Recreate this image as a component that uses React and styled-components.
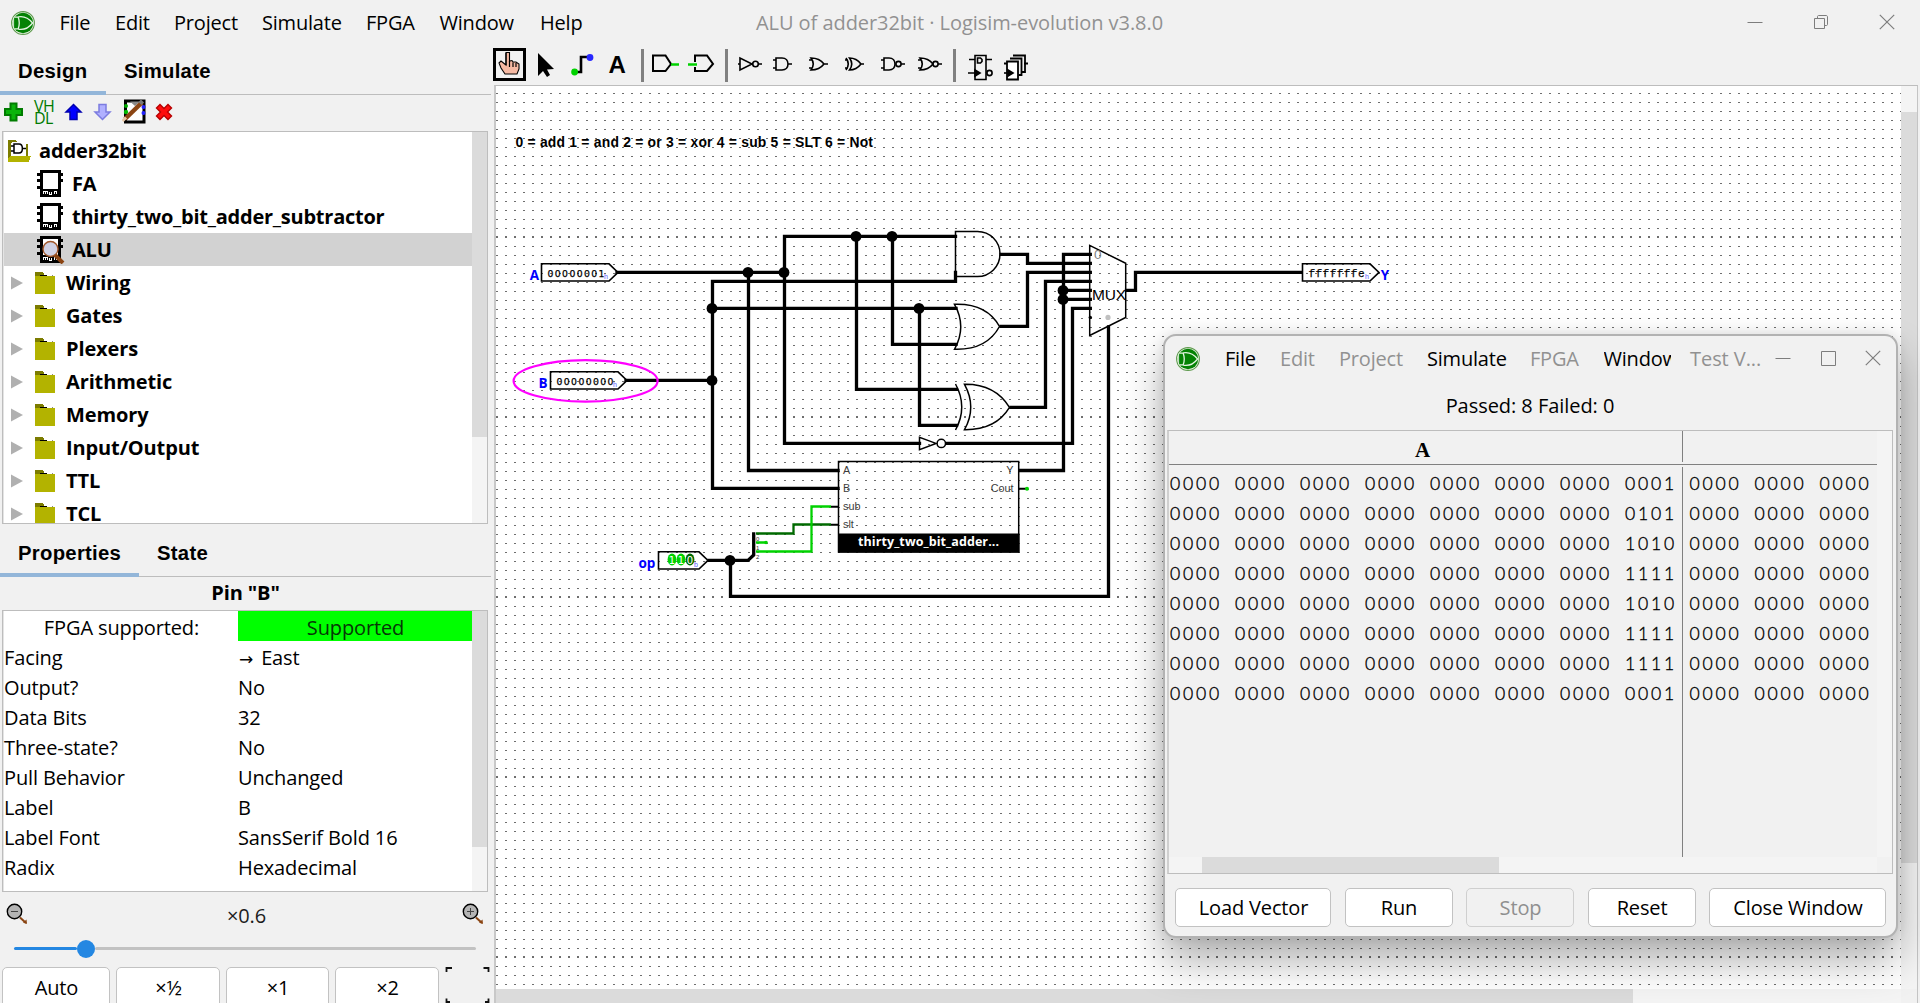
import React from "react";
import styled, { createGlobalStyle } from "styled-components";

const ui = `"Open Sans", "Noto Sans", sans-serif`;
const arial = `"Liberation Sans", Arial, sans-serif`;

const Global = createGlobalStyle`
  * { box-sizing: border-box; }
  body { margin: 0; background: #f1f1f1; overflow: hidden; }
`;

const Frame = styled.div`
  position: relative;
  display: flex;
  flex-direction: column;
  width: 1920px;
  height: 1003px;
  overflow: hidden;
  background: #f1f1f1;
  color: #000;
  font: 20px ${ui};
`;

/* ---------- title bar and menus ---------- */

const TitleBar = styled.header`
  display: flex;
  align-items: center;
  flex: none;
  height: ${(p) => p.$h}px;
  padding-left: ${(p) => p.$pad}px;
  line-height: ${(p) => p.$h}px;
  white-space: nowrap;
`;
const LogoBox = styled.span`
  display: flex;
  flex: none;
  width: ${(p) => p.$w}px;
`;
const MenuItem = styled.span`
  flex: none;
  width: ${(p) => p.$w}px;
  overflow: ${(p) => (p.$clip ? "hidden" : "visible")};
  color: ${(p) => (p.$off ? "#919191" : "#000")};
  letter-spacing: -0.2px;
`;
const Caption = styled.span`
  flex: none;
  width: ${(p) => p.$w}px;
  padding-left: ${(p) => p.$pad || 0}px;
  color: #919191;
  letter-spacing: -0.06px;
`;
const Controls = styled.div`
  display: flex;
  flex: none;
  align-items: center;
  gap: ${(p) => p.$gap}px;
  padding-bottom: 2px;
`;

/* ---------- page columns ---------- */

const Body = styled.div`
  display: flex;
  flex: 1;
  min-height: 0;
`;
const Side = styled.aside`
  display: flex;
  flex-direction: column;
  flex: none;
  width: 494px;
`;
const Main = styled.main`
  display: flex;
  flex-direction: column;
  flex: none;
  width: 1426px;
`;

const TabBar = styled.div`
  display: flex;
  flex: none;
  width: 491px;
  height: 50px;
  margin-top: ${(p) => p.$top || 0}px;
  box-shadow: inset 0 -1px 0 #bdbdbd;
`;
const Tab = styled.div`
  width: ${(p) => p.$w}px;
  height: 50px;
  padding-left: 18px;
  border-bottom: 4px solid ${(p) => (p.$active ? "#93b6d9" : "transparent")};
  font: bold 20.3px/52px ${arial};
  letter-spacing: 0.28px;
`;

const IconBar = styled.div`
  display: flex;
  align-items: center;
  flex: none;
  height: 36px;
  padding: 0 0 3px 3px;
`;
const IconCell = styled.span`
  display: flex;
  flex: none;
  width: ${(p) => p.$w}px;
`;
const Vhdl = styled.span`
  width: 30px;
  color: #007a00;
  font: 16px/12px "Open Sans", sans-serif;
  letter-spacing: -0.6px;
  white-space: pre;
`;

const Panel = styled.section`
  display: flex;
  flex: none;
  width: 486px;
  height: ${(p) => p.$h}px;
  margin-left: 2px;
  border: 1px solid #bdbdbd;
  background: #fff;
  box-shadow: inset 1px 0 0 #e4e4e4;
`;
const PanelBody = styled.div`
  width: 469px;
  height: 100%;
  padding: ${(p) => p.$top || 0}px 0 0 1px;
  overflow: hidden;
`;
const VScroll = styled.div`
  width: ${(p) => p.$w}px;
  padding-top: ${(p) => p.$start || 0}px;
  background: #f4f4f4;
`;
const VThumb = styled.div`
  height: ${(p) => p.$h}px;
  background: #dbdbdb;
`;

const TreeRow = styled.div`
  display: flex;
  align-items: center;
  height: 33px;
  line-height: 35px;
  padding-left: ${(p) => p.$pad}px;
  background: ${(p) => (p.$selected ? "#d2d2d2" : "transparent")};
  font-weight: 700;
  letter-spacing: ${(p) => p.$ls}px;
  white-space: nowrap;
`;

const Heading = styled.div`
  flex: none;
  width: 491px;
  height: 33px;
  font-weight: 700;
  line-height: 31px;
  letter-spacing: -0.1px;
  text-align: center;
`;
const PropRow = styled.div`
  display: grid;
  grid-template-columns: 234px 234px;
  height: 30px;
  line-height: 33.5px;
  white-space: nowrap;
  letter-spacing: -0.12px;
`;
const PropCell = styled.div`
  height: 30px;
  padding-left: ${(p) => (p.$center ? 1 : 0)}px;
  text-align: ${(p) => (p.$center ? "center" : "left")};
  background: ${(p) => (p.$green ? "#00ff00" : "transparent")};
  color: ${(p) => (p.$green ? "#073607" : "#000")};
`;
const Arrow = styled.span`
  margin: 0 8px 0 1px;
  font: 17px/20px "DejaVu Sans", sans-serif;
`;

const ZoomRow = styled.div`
  display: flex;
  justify-content: space-between;
  flex: none;
  height: 44px;
  padding: 11px 10px 0 6px;
  width: 494px;
`;
const ZoomValue = styled.span`
  padding-left: 3px;
  line-height: 25px;
  color: #1c1c1c;
  letter-spacing: -0.2px;
`;
const Slider = styled.div`
  display: flex;
  align-items: center;
  flex: none;
  width: 462px;
  height: 26px;
  padding-bottom: 1px;
  margin-left: 14px;
`;
const SliderBar = styled.div`
  flex: ${(p) => (p.$w ? `0 0 ${p.$w}px` : "1")};
  height: 3px;
  border-radius: 2px;
  background: ${(p) => (p.$w ? "#2487e2" : "#c2c2c2")};
`;
const SliderThumb = styled.div`
  width: 18px;
  height: 18px;
  border-radius: 50%;
  background: #2487e2;
`;
const ButtonRow = styled.div`
  display: flex;
  flex: none;
  gap: ${(p) => p.$gap}px;
  padding: ${(p) => p.$pad};
`;
const Button = styled.button`
  flex: none;
  width: ${(p) => p.$w}px;
  height: ${(p) => p.$h}px;
  padding: 0 0 0 1px;
  border: 1.5px solid ${(p) => (p.disabled ? "#cfcfcf" : "#c2c2c2")};
  border-radius: 5px;
  background: ${(p) => (p.disabled ? "#f1f1f1" : "#fff")};
  color: ${(p) => (p.disabled ? "#8f8f8f" : "#000")};
  font: 20px ${ui};
  letter-spacing: -0.15px;
  white-space: nowrap;
`;

/* ---------- tool bar and canvas ---------- */

const ToolBar = styled.div`
  flex: none;
  height: 40px;
`;
const Drawing = styled.svg`
  display: block;
`;
const CanvasBox = styled.div`
  display: grid;
  grid-template-columns: 1405px 16px;
  grid-template-rows: 903px 14px;
  flex: none;
  width: 1424px;
  height: 918px;
  border-top: 1px solid #bdbdbd;
  border-left: 2px solid #c8c8c8;
  border-right: 1px solid #c4c4c4;
`;
const HTrack = styled.div`
  background: #f4f4f4;
`;
const HThumb = styled.div`
  width: ${(p) => p.$w}px;
  height: 100%;
  margin-left: ${(p) => p.$start || 0}px;
  background: #dbdbdb;
`;

/* ---------- test vector window ---------- */

const Dialog = styled.section`
  position: absolute;
  left: 1163px;
  top: 334px;
  display: flex;
  flex-direction: column;
  width: 735px;
  height: 604px;
  border: 2px solid #b2b2b2;
  border-radius: 13px;
  background: #f1f1f1;
  box-shadow: 0 22px 42px rgba(0, 0, 0, 0.32), 0 0 14px rgba(0, 0, 0, 0.1);
`;
const Status = styled.div`
  flex: none;
  height: 49px;
  line-height: 49px;
  padding-right: 1px;
  text-align: center;
  letter-spacing: -0.05px;
`;
const Vector = styled.div`
  display: grid;
  grid-template-columns: 708px 15px;
  grid-template-rows: 426px 16px;
  flex: none;
  width: 726px;
  height: 444px;
  margin-left: 2px;
  border: 1px solid #bdbdbd;
  border-left-width: 2px;
  border-left-color: #cfcfcf;
`;
const VectorGrid = styled.div`
  display: grid;
  grid-template-columns: 514px 194px;
  grid-template-rows: 34px 392px;
  overflow: hidden;
`;
const VectorHead = styled.div`
  padding-left: 246px;
  border-bottom: 1px solid #808080;
  font: bold 21px/38px "Liberation Serif", serif;
  background: ${(p) => (p.$line ? "linear-gradient(#808080, #808080) right top / 1px 31px no-repeat" : "none")};
`;
const VectorBody = styled.div`
  padding: 4px 0 0 ${(p) => p.$left}px;
  background: ${(p) => (p.$line ? "linear-gradient(#808080, #808080) right 2px / 1px 390px no-repeat" : "none")};
  background-position: right 2px;
  overflow: hidden;
`;
const VectorRow = styled.div`
  display: grid;
  grid-template-columns: repeat(8, 65px);
  height: 30px;
  font: 300 17.6px/30px Lato, sans-serif;
  -webkit-text-stroke: 0.35px #000;
`;
const Nibble = styled.span`
  letter-spacing: 2.8px;
  white-space: pre;
`;

/* ---------- drawings ---------- */

const Logo = () => (
  <svg width="24" height="24" viewBox="0 0 24 24">
    <circle cx="12" cy="12" r="11.4" fill="#eef5ea" stroke="#5f9a4e" strokeWidth="1.1" />
    <circle cx="12" cy="12" r="10.2" fill="#048204" />
    <path d="M3.6 6.2H7.2C8.6 10 8.6 14 7.2 17.8H3.6M7.2 5.8C14 4.6 18.5 8 21.6 12C18.5 16 14 19.4 7.2 18.2" fill="none" stroke="#e3f3e0" strokeWidth="1.3" />
    <path d="M2.6 6.5V17.5" stroke="#e3f3e0" strokeWidth="0.9" />
  </svg>
);

const MinIcon = () => (
  <svg width="16" height="16" viewBox="0 0 16 16"><path d="M0.500 8.500H15.500" stroke="#7d7d7d" /></svg>
);
const MaxIcon = () => (
  <svg width="16" height="16" viewBox="0 0 16 16"><path d="M1.500 1.500H15.500V15.500H1.500Z" fill="none" stroke="#7d7d7d" /></svg>
);
const RestoreIcon = () => (
  <svg width="16" height="16" viewBox="0 0 16 16">
    <path d="M1.500 4.500H11.500V14.500H1.500ZM4.500 4V2.500C4.500 2 5 1.500 5.500 1.500H13C14 1.500 14.500 2 14.500 3V10.500C14.500 11 14 11.500 13.500 11.500H12" fill="none" stroke="#7d7d7d" />
  </svg>
);
const CloseIcon = () => (
  <svg width="16" height="16" viewBox="0 0 16 16"><path d="M0.800 0.800L15.200 15.200M15.200 0.800L0.800 15.200" stroke="#7d7d7d" strokeWidth="1.200" /></svg>
);

const PlusIcon = () => (
  <svg width="21" height="20" viewBox="0 0 21 20">
    <path d="M7.500 1.500H13.500V7H19V13H13.500V18.500H7.500V13H2V7H7.500Z" fill="#0ab40a" stroke="#007c00" strokeWidth="2" />
  </svg>
);
const ArrowIcon = ({ fill, line, down }) => (
  <svg width="19" height="18" viewBox="0 0 19 18">
    <path transform={down ? "rotate(180 9.500 9)" : undefined} d="M9.500 1.500L17 9H13V16.500H6V9H2Z" fill={fill} stroke={line} strokeWidth="1.500" />
  </svg>
);
const EditIcon = () => (
  <svg width="24" height="25" viewBox="0 0 24 25">
    <path d="M3.500 2H22V23H3.500Z" fill="#fff" stroke="#000" strokeWidth="3" />
    <path d="M8 2.500H18L13 7Z" fill="#888" />
    <circle cx="4" cy="7" r="2" fill="#0a0" /><circle cx="4" cy="13" r="2.200" fill="#0b0" />
    <circle cx="21.500" cy="8" r="2" fill="#22f" /><circle cx="21.500" cy="14" r="2" fill="#22f" />
    <path d="M3 20L20 3.500" stroke="#8b4513" strokeWidth="4.500" />
    <path d="M0.500 22L4 18.500" stroke="#e8c8a8" strokeWidth="3" />
    <path d="M18 4.500L20.500 2" stroke="#777" strokeWidth="4.500" />
  </svg>
);
const DeleteIcon = () => (
  <svg width="18" height="18" viewBox="0 0 18 18">
    <path d="M5 1.500L9 5.500L13 1.500L16.500 5L12.500 9L16.500 13L13 16.500L9 12.500L5 16.500L1.500 13L5.500 9L1.500 5Z" fill="#ff0d0d" stroke="#b80000" strokeWidth="1.400" />
  </svg>
);

const ProjectIcon = () => (
  <svg width="23" height="22" viewBox="0 0 23 22">
    <g shapeRendering="crispEdges">
      <path d="M0 0H7L9 2H4V18L0 22Z" fill="#7c7c00" />
      <path d="M3 3H18V16H3Z" fill="#fff" />
      <path d="M0 22V18L3 16H23L21 22Z" fill="#b3b300" />
      <path d="M19 4V16" stroke="#7c7c00" strokeWidth="2" />
    </g>
    <path d="M6 4H11C15.500 4 15.500 13 11 13H6ZM3 6H6M3 11H6M15 8.500H18" fill="none" stroke="#000" strokeWidth="1.500" />
  </svg>
);
const ChipIcon = ({ lens }) => (
  <svg width="28" height="28" viewBox="0 0 28 28">
    <g shapeRendering="crispEdges">
      <path d="M3 0H24V27H3Z" />
      <path d="M6 3H21V19H6Z" fill="#fff" />
      <path d="M0 3H4V6H0ZM0 9H4V12H0ZM0 16H4V19H0ZM23 3H26V6H23ZM23 9H26V12H23Z" />
      <path d="M6.500 24V21.500H10.500V24M8.500 21.500V24M12.500 21.500V24H14.500V21.500M17 24V21.500H19.500V24" fill="none" stroke="#fff" />
    </g>
    {lens && <path d="M18 19L26 27" stroke="#8b4513" strokeWidth="4" />}
    {lens && <circle cx="13.500" cy="13" r="7.500" fill="#cfd0e2" stroke="#a0572a" strokeWidth="1.400" />}
  </svg>
);
const FolderIcon = () => (
  <svg width="20" height="22" viewBox="0 0 20 22" shapeRendering="crispEdges">
    <path d="M0 0H7L9 2V4H0Z" fill="#7c7c00" />
    <path d="M5 3H12V4H5Z" />
    <path d="M17 3H18V4H17Z" fill="#888" />
    <path d="M0 4H20V22H0Z" fill="#b3b300" />
  </svg>
);
const Triangle = () => (
  <svg width="12" height="14" viewBox="0 0 12 14"><path d="M0 0.500L12 7L0 13.500Z" fill="#b0b0b0" /></svg>
);
const ZoomIcon = ({ plus }) => (
  <svg width="22" height="22" viewBox="0 0 22 22">
    <path d="M14 14.500L20 20" stroke="#8b4513" strokeWidth="2" />
    <path d="M17 19.500L20.500 16.500L21 21Z" fill="#8b4513" />
    <circle cx="8.500" cy="8.500" r="7.200" fill="#b4b4b4" stroke="#000" strokeWidth="1.400" />
    <path d={plus ? "M5 8.500H12M8.500 5V12" : "M5 8.500H12"} stroke="#444" />
  </svg>
);
const CornersIcon = () => (
  <svg width="46" height="40" viewBox="0 0 46 40">
    <path d="M1.500 5V1H7M38.500 1H43.500V5M1.500 31.500V35H5M40 35H43.500V31.500" fill="none" stroke="#111" strokeWidth="1.800" />
  </svg>
);

/* The tool bar drawing uses window coordinates, origin at (494, 45). */
const Tools = () => (
  <Drawing width="558" height="40" viewBox="494 45 558 40" overflow="visible" fill="none" stroke="#000" strokeWidth="1.600">
    <rect x="494.500" y="49.500" width="30" height="30" strokeWidth="3" />
    <path d="M506 52.500H509.500V61L512 60.500L513 62L516 62L519 64V69L517 74H505L501 68L499 63L501 61L506 65Z" fill="#f5b9a3" strokeWidth="1.100" />
    <path d="M506 65V53M509.500 61V67M513 62.500V67M516 63V67" strokeWidth="1.200" />
    <path d="M538 53V76L543 71L547 77L550 75L547 69.500L554 69Z" fill="#000" stroke="none" />
    <path d="M576 72H581V57H588" strokeWidth="2.600" />
    <circle cx="574.600" cy="72" r="3.400" fill="#00d200" stroke="none" />
    <circle cx="590" cy="57.500" r="3.400" fill="#2828ff" stroke="none" />
    <path d="M642.500 49V82M726.500 49V82M954.500 49V82" stroke="#808080" strokeWidth="3" />
    <path d="M653 55.500H665.500L671 64L665.500 71H653Z" strokeWidth="2" />
    <path d="M671 64.500H679M688 64.500H697" stroke="#00d200" strokeWidth="2.600" />
    <path d="M695 62V55.500H707L713 64L707 71H695V67" strokeWidth="2" />
    <path d="M738 64H740M740 58V70L752 64ZM758 64H762" />
    <circle cx="755.500" cy="64" r="2.800" />
    <path d="M773 60H776M773 68H776M776 58H782C790 58 790 70 782 70H776ZM788 64H792" />
    <path d="M809 60H812M809 68H812M811 58C814 62 814 66 811 70C818 70 821 68 824 64C821 60 818 58 811 58ZM824 64H828" />
    <path d="M845 60H848M845 68H848M846 58C849 62 849 66 846 70M849.500 58C852.500 62 852.500 66 849.500 70C855 70 858 68 861 64C858 60 855 58 849.500 58ZM861 64H864" />
    <path d="M881 60H884M881 68H884M884 58H889C897 58 897 70 889 70H884ZM901 64H905" />
    <circle cx="898.500" cy="64" r="2.600" />
    <path d="M918 60H921M918 68H921M920 58C923 62 923 66 920 70C927 70 930 68 933 64C930 60 927 58 920 58ZM938 64H942" />
    <circle cx="935.500" cy="64" r="2.600" />
    <path d="M975 55.500H986V79.500H975ZM969 59.500H975M986 59.500H992M968 73H975M977.500 58V63H980.500L982 61.500V59.500L980.500 58Z" />
    <path d="M975 70L980 73L975 76Z" fill="#000" />
    <circle cx="989.500" cy="73" r="2.600" />
    <path d="M1013 55.500H1025V72H1022M1010 58.500H1021.500V75H1018.500M1004 63.500H1010M1024 63.500H1028" strokeWidth="1.800" />
    <path d="M1007 61.500H1018V79.500H1007Z" fill="#fff" strokeWidth="1.800" />
    <path d="M1004 73H1008" />
    <path d="M1008 70L1013 73L1008 76Z" fill="#000" />
    <text x="608.500" y="73" fill="#000" stroke="none" fontFamily="Liberation Sans" fontWeight="700" fontSize="24">A</text>
  </Drawing>
);

const wires = [
  "M617 272.400H784.500M748.500 272.400V470.500H838M784.500 236.400V443.400H919.500M784.500 236.400H955.500",
  "M626 380.400H712.500M712.500 488.400V281.400H955.500V272.500M712.500 308.400H956M712.500 488.400H838",
  "M892.500 236.400V344.400H956M856.500 236.400V389.400H956.500M919.500 308.400V425.400H956.500",
  "M1001 254.400H1027.500V263.400H1090.300M1001 326.400H1027.500V272.400H1090.300M1011 407.400H1045.500V281.400H1090.300",
  "M1090.300 254.400H1063.500V470.500H1020M1063.500 290.400H1090.300M1063.500 299.400H1090.300",
  "M947.500 443.400H1072.500V308.400H1090.300M1126.500 290.400H1135.500V272.400H1301",
  "M709 560.400H748L753.700 555V534M730.500 560.400V596.400H1108.500V327",
];
const junctions = [[748, 272.4], [784, 272.4], [712, 308.4], [712, 380.4], [856, 236.4], [892, 236.4], [919, 308.4], [1063, 290.4], [1063, 299.4], [730, 560.4]];

const Pin = ({ x, y, w, value, radix, tx, tw, mono }) => (
  <g>
    <path d={`M${x} ${y - 8.6}H${x + w}L${x + w + 9} ${y}L${x + w} ${y + 8.6}H${x}Z`} fill="none" stroke="#000" strokeWidth="1.600" />
    {value && (
      <text x={tx} y={y + 4.4} fontFamily={mono ? "Liberation Mono" : "DejaVu Sans"} fontSize={mono ? 11 : 9.3} textLength={tw} lengthAdjust="spacing" stroke="#000" strokeWidth="0.250">{value}</text>
    )}
    <text x={x + w - 5} y={y + 6.5} fontFamily="Liberation Sans" fontSize="7" fill="#5a5aff">{radix}</text>
  </g>
);

const Circuit = () => (
  <Drawing width="1405" height="903" viewBox="496 86 1405 903">
    <defs>
      <pattern id="dots" x="505" y="93" width="9" height="9" patternUnits="userSpaceOnUse">
        <rect width="2" height="1" fill="#6e6e6e" shapeRendering="crispEdges" />
      </pattern>
      <pattern id="dense" x="505" y="236" width="9" height="180" patternUnits="userSpaceOnUse">
        <rect width="2" height="1" fill="#6e6e6e" shapeRendering="crispEdges" />
      </pattern>
    </defs>
    <rect x="496" y="86" width="1405" height="903" fill="#fff" />
    <rect x="496" y="86" width="1405" height="903" fill="url(#dots)" />
    <rect x="496" y="86" width="1405" height="903" fill="url(#dense)" />
    <text x="515.500" y="146.600" fontFamily="Liberation Sans" fontWeight="700" fontSize="13.900" textLength="357.500">0 = add 1 = and 2 = or 3 = xor 4 = sub 5 = SLT 6 = Not</text>
    {wires.map((d) => <path key={d} d={d} fill="none" stroke="#000" strokeWidth="3.300" strokeLinecap="square" />)}
    {junctions.map(([x, y]) => <circle key={`${x}-${y}`} cx={x} cy={y} r="5.400" />)}

    <g fill="none" strokeWidth="2.300">
      <path d="M756 533.500H793.500V524.500H831" stroke="#006a00" />
      <path d="M756 551.500H811.500V506.500H831M756 542.500H766" stroke="#00d200" />
    </g>
    <circle cx="766" cy="542.500" r="1.800" fill="#00d200" />
    <path d="M831 506.700H838M831 524.700H838M1019 488.700H1026" stroke="#000" strokeWidth="2" />
    <circle cx="1027" cy="488.700" r="2" fill="#00d200" />
    <g fontFamily="Liberation Sans" fontSize="6" fill="#333">
      <text x="756" y="541">0</text><text x="756" y="550">1</text><text x="756" y="559">2</text>
    </g>

    <g fill="none" stroke="#000" strokeWidth="1.500">
      <path d="M955.500 231.500H977.500A22.500 22.500 0 0 1 977.500 276.500H955.500Z" />
      <path d="M954.500 304.300Q967 326.500 954.500 349.300C976 350 991 342 999.500 326.500C991 311 976 303.500 954.500 304.300Z" />
      <path d="M955.500 384Q968 407 955.500 430M964.500 384.300Q977 407 964.500 429.700C986 430 1000 423 1009.500 407.400C1000 392 986 384 964.500 384.300Z" />
      <path d="M919.500 437.300V449.600L936 443.400Z" />
      <circle cx="941.300" cy="443.400" r="4.200" fill="#fff" />
      <path d="M1089.700 245.400V335.500L1125.700 317.500V263.300Z" />
      <path d="M838.500 461.500H1018.700V552H838.500Z" />
    </g>
    <path d="M838 533.500H1019.500V552.500H838Z" />
    <circle cx="1090.300" cy="317.400" r="1.700" />
    <circle cx="1108" cy="317.400" r="2.600" fill="#c0c0c0" />
    <g fontFamily="Liberation Sans" fontSize="15.500">
      <text x="1092" y="300" textLength="34">MUX</text>
      <text x="1094" y="258.700" fontSize="13.500" fill="#808080">0</text>
    </g>
    <g fontFamily="Liberation Sans" fontSize="10.800" fill="#3c3c3c">
      <text x="843" y="474">A</text><text x="843" y="492">B</text>
      <text x="843" y="510">sub</text><text x="843" y="528">slt</text>
      <text x="1013.500" y="474" textAnchor="end">Y</text><text x="1013.500" y="492" textAnchor="end">Cout</text>
    </g>
    <text x="858" y="545.500" fontFamily="Open Sans" fontWeight="700" fontSize="12.500" fill="#fff" textLength="141">thirty_two_bit_adder...</text>

    <Pin x={541.5} y={272.4} w={67.5} value="00000001" radix="h" tx={547.5} tw={57} />
    <Pin x={550.5} y={380.4} w={67.5} value="00000000" radix="h" tx={556.5} tw={57} />
    <Pin x={1302.5} y={272.4} w={67.5} value="fffffffe" radix="h" tx={1308.5} tw={56} mono />
    <Pin x={658.5} y={560.4} w={40.5} radix="b" />
    {[[672, "1", "#00d200"], [681, "1", "#00d200"], [690, "0", "#006a00"]].map(([x, t, c]) => (
      <g key={x}>
        <ellipse cx={x} cy="559.600" rx="4.400" ry="6" fill={c} />
        <text x={x} y="563.600" textAnchor="middle" fontFamily="DejaVu Sans" fontSize="10" fill="#fff">{t}</text>
      </g>
    ))}
    <ellipse cx="585.600" cy="380.900" rx="72" ry="20.700" fill="none" stroke="#ff00ff" strokeWidth="2.200" />
    <g fontFamily="Open Sans" fontWeight="700" fontSize="13.500" fill="#0000ff">
      <text x="529.800" y="279.500">A</text><text x="538.500" y="387.700">B</text>
      <text x="638.500" y="567.700">op</text><text x="1380.800" y="279.500">Y</text>
    </g>
  </Drawing>
);

/* ---------- data ---------- */

const libraries = ["Wiring", "Gates", "Plexers", "Arithmetic", "Memory", "Input/Output", "TTL", "TCL"];
const props = [
  ["Output?", "No"],
  ["Data Bits", "32"],
  ["Three-state?", "No"],
  ["Pull Behavior", "Unchanged"],
  ["Label", "B"],
  ["Label Font", "SansSerif Bold 16"],
  ["Radix", "Hexadecimal"],
];
const lastNibbles = ["0001", "0101", "1010", "1111", "1010", "1111", "1111", "0001"];
const zeros = (n) => Array(n).fill("0000");

const Column = ({ rows, line, left }) => (
  <VectorBody $line={line} $left={left}>
    {rows.map((row, i) => (
      <VectorRow key={i}>{row.map((n, k) => <Nibble key={k}>{n}</Nibble>)}</VectorRow>
    ))}
  </VectorBody>
);

const TestVector = () => (
  <Dialog>
    <TitleBar $h={45} $pad={11}>
      <LogoBox $w={49}><Logo /></LogoBox>
      <MenuItem $w={55}>File</MenuItem>
      <MenuItem $w={59} $off>Edit</MenuItem>
      <MenuItem $w={88} $off>Project</MenuItem>
      <MenuItem $w={103}>Simulate</MenuItem>
      <MenuItem $w={73.5} $off>FPGA</MenuItem>
      <MenuItem $w={67.5} $clip>Window</MenuItem>
      <Caption $w={104} $pad={19}>Test V...</Caption>
      <Controls $gap={29}><MinIcon /><MaxIcon /><CloseIcon /></Controls>
    </TitleBar>
    <Status>Passed: 8 Failed: 0</Status>
    <Vector>
      <VectorGrid>
        <VectorHead $line>A</VectorHead>
        <VectorHead />
        <Column line left={1} rows={lastNibbles.map((n) => [...zeros(7), n])} />
        <Column left={6.5} rows={lastNibbles.map(() => zeros(3))} />
      </VectorGrid>
      <VScroll $w={15} />
      <HTrack><HThumb $start={33} $w={297} /></HTrack>
    </Vector>
    <ButtonRow $gap={13.5} $pad="14px 0 0 10px">
      <Button $w={156} $h={39}>Load Vector</Button>
      <Button $w={108} $h={39}>Run</Button>
      <Button $w={108} $h={39} disabled>Stop</Button>
      <Button $w={108} $h={39}>Reset</Button>
      <Button $w={177} $h={39}>Close Window</Button>
    </ButtonRow>
  </Dialog>
);

export default function App() {
  return (
    <Frame>
      <Global />
      <TitleBar $h={45} $pad={11}>
        <LogoBox $w={48.5}><Logo /></LogoBox>
        <MenuItem $w={55.5}>File</MenuItem>
        <MenuItem $w={59}>Edit</MenuItem>
        <MenuItem $w={88}>Project</MenuItem>
        <MenuItem $w={104}>Simulate</MenuItem>
        <MenuItem $w={73.5}>FPGA</MenuItem>
        <MenuItem $w={100.5}>Window</MenuItem>
        <MenuItem $w={216}>Help</MenuItem>
        <Caption $w={991}>ALU of adder32bit · Logisim-evolution v3.8.0</Caption>
        <Controls $gap={50}><MinIcon /><RestoreIcon /><CloseIcon /></Controls>
      </TitleBar>
      <Body>
        <Side>
          <TabBar>
            <Tab $w={106} $active>Design</Tab>
            <Tab $w={120}>Simulate</Tab>
          </TabBar>
          <IconBar>
            <IconCell $w={31}><PlusIcon /></IconCell>
            <Vhdl>{"VH\nDL"}</Vhdl>
            <IconCell $w={29}><ArrowIcon fill="#0000ff" line="#0000b0" /></IconCell>
            <IconCell $w={29}><ArrowIcon fill="#b0b0ff" line="#7c7ce0" down /></IconCell>
            <IconCell $w={33}><EditIcon /></IconCell>
            <DeleteIcon />
          </IconBar>
          <Panel $h={393}>
            <PanelBody $top={2}>
              <TreeRow $pad={4} $ls={-0.12}><IconCell $w={31}><ProjectIcon /></IconCell>adder32bit</TreeRow>
              <TreeRow $pad={33} $ls={-0.2}><IconCell $w={35}><ChipIcon /></IconCell>FA</TreeRow>
              <TreeRow $pad={33} $ls={-0.24}><IconCell $w={35}><ChipIcon /></IconCell>thirty_two_bit_adder_subtractor</TreeRow>
              <TreeRow $pad={33} $ls={-0.2} $selected><IconCell $w={35}><ChipIcon lens /></IconCell>ALU</TreeRow>
              {libraries.map((name) => (
                <TreeRow key={name} $pad={7} $ls={-0.12}>
                  <IconCell $w={24}><Triangle /></IconCell>
                  <IconCell $w={31}><FolderIcon /></IconCell>
                  {name}
                </TreeRow>
              ))}
            </PanelBody>
            <VScroll $w={15}><VThumb $h={305} /></VScroll>
          </Panel>
          <TabBar $top={3}>
            <Tab $w={139} $active>Properties</Tab>
            <Tab $w={120}>State</Tab>
          </TabBar>
          <Heading>Pin "B"</Heading>
          <Panel $h={282}>
            <PanelBody>
              <PropRow>
                <PropCell $center>FPGA supported:</PropCell>
                <PropCell $center $green>Supported</PropCell>
              </PropRow>
              <PropRow>
                <PropCell>Facing</PropCell>
                <PropCell><Arrow>→</Arrow>East</PropCell>
              </PropRow>
              {props.map(([name, value]) => (
                <PropRow key={name}>
                  <PropCell>{name}</PropCell>
                  <PropCell>{value}</PropCell>
                </PropRow>
              ))}
            </PanelBody>
            <VScroll $w={15}><VThumb $h={236} /></VScroll>
          </Panel>
          <ZoomRow>
            <ZoomIcon />
            <ZoomValue>×0.6</ZoomValue>
            <ZoomIcon plus />
          </ZoomRow>
          <Slider>
            <SliderBar $w={63} />
            <SliderThumb />
            <SliderBar />
          </Slider>
          <ButtonRow $gap={6} $pad="5px 0 0 2px">
            <Button $w={108} $h={41}>Auto</Button>
            <Button $w={104} $h={41}>×½</Button>
            <Button $w={103} $h={41}>×1</Button>
            <Button $w={104} $h={41}>×2</Button>
            <CornersIcon />
          </ButtonRow>
        </Side>
        <Main>
          <ToolBar><Tools /></ToolBar>
          <CanvasBox>
            <Circuit />
            <VScroll $w={16} $start={26}><VThumb $h={751} /></VScroll>
            <HTrack><HThumb $w={1137} /></HTrack>
          </CanvasBox>
        </Main>
      </Body>
      <TestVector />
    </Frame>
  );
}
